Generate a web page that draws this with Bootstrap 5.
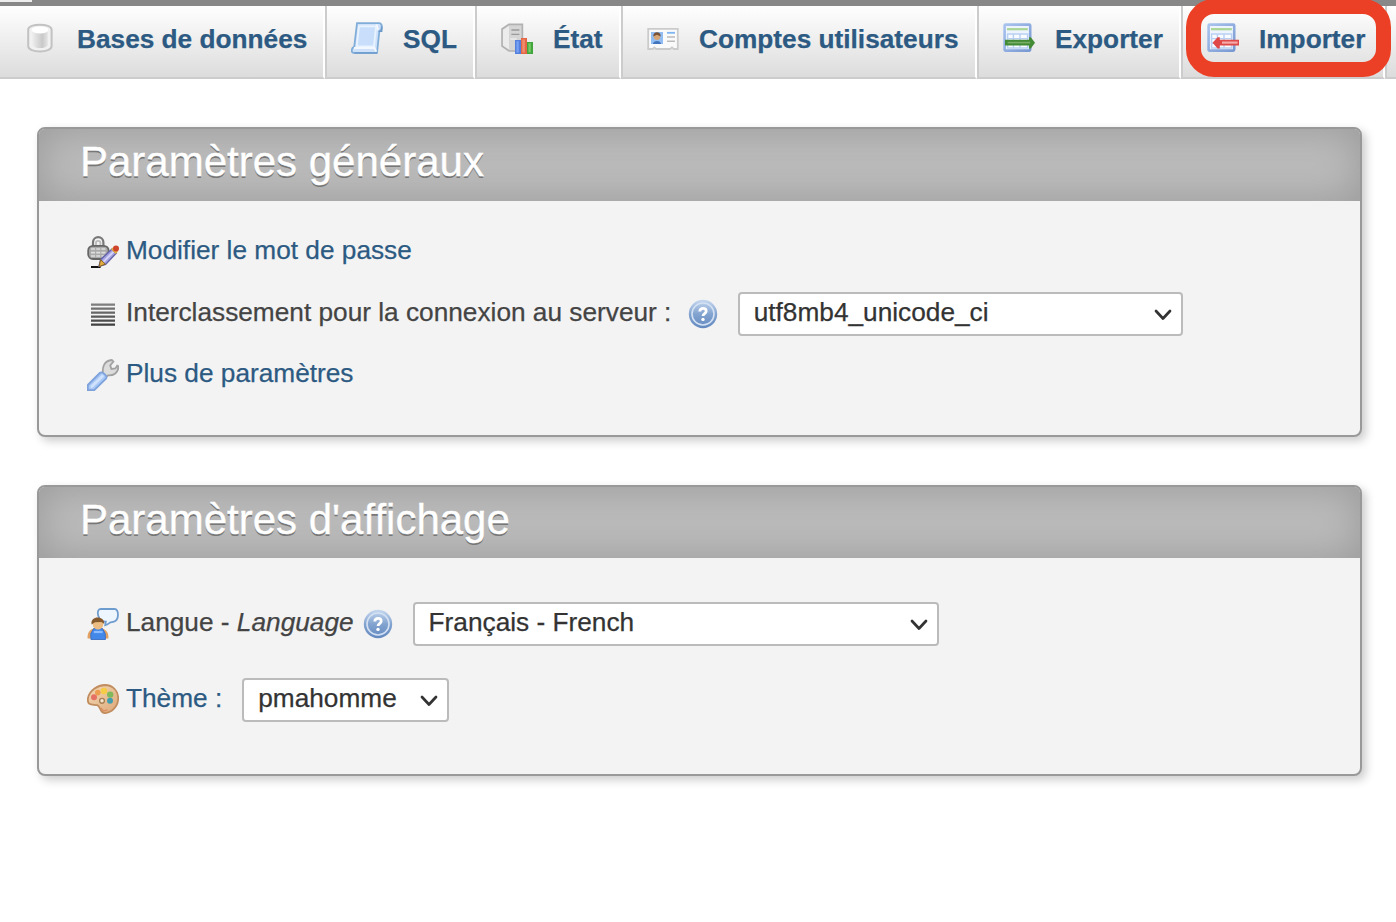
<!DOCTYPE html>
<html lang="fr">
<head>
<meta charset="utf-8">
<title>phpMyAdmin</title>
<link href="https://cdn.jsdelivr.net/npm/bootstrap@5.3.0/dist/css/bootstrap.min.css" rel="stylesheet">
<style>
body{font-family:"Liberation Sans",Arial,sans-serif;font-size:26.24px;line-height:44px;color:#444;background:#fff;overflow:hidden;min-height:100vh;-webkit-text-stroke:.25px}
a{color:#2c5a82;text-decoration:none}
svg.ico{width:32px;height:32px;flex:none;display:block}
.top-strip{height:6px;background:#888}
.top-strip span{display:block;width:32px;height:2px;background:#eee}
.tabs{height:73px;overflow:hidden;margin-left:-2px}
.tabs .tab{flex:none;height:73px;padding:16px 0 0 24px;gap:20px;font-weight:700;background:linear-gradient(#fff,#dcdcdc) padding-box;border:0 solid #ccc;border-left-width:2px;border-right:2px solid #fff;border-bottom-width:2px}
.tabs .tab:first-child{border-left-color:#fff}
.tabs .w1{gap:21px}
.tab span{line-height:34px;height:34px}
.w1{width:327px}.w2{width:150px}.w3{width:146px}.w4{width:356px}.w5{width:204px}
.ring{left:1186px;top:-1px;width:205px;height:78px;border:15px solid #ec4026;border-radius:28px}
.panel{margin:48px 34px 0 37px;border:2px solid #999;border-radius:8px;background:#f3f3f3;box-shadow:4px 4px 10px #ccc}
.panel h2{margin:0;padding-left:41px;color:#fff;font-size:42px;font-weight:400;line-height:66px;background:#bbb;border-radius:6px 6px 0 0;box-shadow:inset 0 0 40px #999;text-shadow:0 2px 0 #777;-webkit-text-stroke:.4px}
.p1{height:310px}.p1 h2{height:72px}
.p2{height:291px}.p2 h2{height:71px}
.line{height:44px;padding-left:48px}
.line .txt{padding-left:7px;height:48px;white-space:pre;padding-bottom:4px}
.r1{margin-top:29px}.r2{margin-top:18px}.r3{margin-top:17px}.r4{margin-top:44px}.r5{margin-top:32px}
.form-select{height:44px;border:2px solid #bbb;border-radius:4px;color:#333;font-size:26.24px;line-height:36px;padding:0 40px 4px 14px;background-color:#fff;background-size:18px 14px;background-position:right 9px top 14px;background-image:url("data:image/svg+xml,%3Csvg xmlns='http://www.w3.org/2000/svg' viewBox='0 0 18 14'%3E%3Cpath d='M2 3l7 7.5L16 3' fill='none' stroke='%23333' stroke-width='2.7' stroke-linecap='round' stroke-linejoin='round'/%3E%3C/svg%3E")}
.s1{width:445px;margin-left:19px}.s2{width:526px;margin-left:19px}.s3{width:207px;margin-left:20px}
.help2{margin-left:8px}
</style>
</head>
<body>
<svg width="0" height="0" class="position-absolute">
<defs>
<linearGradient id="gSilver"><stop stop-color="#eee"/><stop offset=".65" stop-color="#c9c9c9"/><stop offset="1" stop-color="#e4e4e4"/></linearGradient>
<linearGradient id="gBlue" x2="0" y2="1"><stop stop-color="#c6d8ef"/><stop offset=".5" stop-color="#83a4d0"/><stop offset="1" stop-color="#6288bf"/></linearGradient>
<linearGradient id="gGrid" x2="1" y2="1"><stop stop-color="#a9c3ee"/><stop offset="1" stop-color="#7798d2"/></linearGradient>
<linearGradient id="gLines" gradientUnits="userSpaceOnUse" x1="0" y1="2" x2="0" y2="14"><stop stop-color="#858585"/><stop offset="1" stop-color="#3c3c3c"/></linearGradient>
<linearGradient id="gWood" x2="1" y2="1"><stop stop-color="#f5d9b5"/><stop offset="1" stop-color="#dca879"/></linearGradient>
<symbol id="help" viewBox="0 0 16 16"><circle cx="8" cy="8" r="7.1" fill="url(#gBlue)"/><circle cx="8" cy="8" r="5.5" fill="none" stroke="#d3e1f3" stroke-width=".8"/><path d="M6.4 6.7C6.4 4.7 9.6 4.8 9.6 6.6 9.6 7.8 8 7.8 8 9" fill="none" stroke="#fff" stroke-width="1.4"/><circle cx="8" cy="10.7" r=".85" fill="#fff"/></symbol>
<symbol id="grid" viewBox="0 0 16 16"><rect x=".8" y="1.3" width="12.8" height="13" rx=".5" fill="#eef4fd" stroke="url(#gGrid)" stroke-width="1.3"/><path d="M2 3.6h10.4" stroke="#a9d696" stroke-width="1.1"/><path d="M2.3 6h10v7h-10zM2.3 8.3h10M2.3 10.6h10M5.2 6v7M8.5 6v7" fill="#f8fbff" stroke="#b9cff2" stroke-width=".7"/></symbol>
</defs>
</svg>
<div class="top-strip"><span></span></div>
<nav class="tabs d-flex">
<a href="#" class="tab w1 d-flex"><svg class="ico" viewBox="0 0 16 16"><path d="M2.1 3.8C2.1.5 13.8.5 13.8 3.8V12c0 3.7-11.7 3.7-11.7 0z" fill="#f1f1f1" stroke="#c2c2c2" stroke-width="1"/><path d="M4.1 4.5v7.2c1.4 1.7 6.4 1.7 7.8 0V4.5z" fill="url(#gSilver)"/><ellipse cx="8" cy="4" rx="4.2" ry="1.7" fill="#fff"/></svg><span>Bases de données</span></a>
<a href="#" class="tab w2 d-flex"><svg class="ico" viewBox="0 0 16 16"><path d="M3 .6h11.2c1.6.2 1.7 3.7 0 3.9L13 15.4H1.4C-.2 15.4.2 12.7 1.6 12.5z" fill="#d0e2fa" stroke="#81add9" stroke-width=".9"/><path d="M4 2.2h8.5l-1 10H2.9z" fill="#c8defa" stroke="#e9f3ff" stroke-width=".9"/><path d="M1.5 13h10.2l1 1.8M12.8 1.2l.7 3" fill="none" stroke="#f3f8ff" stroke-width=".9"/><path d="M1.7 15.5h11.4M13.8 4.6h1.5V2.3" fill="none" stroke="#6c9acb" stroke-width=".8"/></svg><span>SQL</span></a>
<a href="#" class="tab w3 d-flex"><svg class="ico" viewBox="0 0 16 16"><path d="M.5 3.5L4 1.2h6.7v13.3H4L.5 12z" fill="#d5d5d5" stroke="#b1b1b1" stroke-width=".8"/><path d="M1 4l3-2v11.7l-3-2z" fill="#ececec"/><path d="M5.2 4h4M5.2 6.2h4" stroke="#9b9b9b" stroke-width=".7"/><path d="M4.6 8.5h3.2" stroke="#eee" stroke-width=".7"/><path d="M7 9h3v7H7z" fill="#5380df"/><path d="M7.7 9.6h1.2V15.3H7.7z" fill="#75a0f1"/><path d="M10 8h3v8h-3z" fill="#e56645"/><path d="M10.7 8.7h1.2v6.6h-1.2z" fill="#f08f70"/><path d="M13 10h3v6h-3z" fill="#43a53e"/><path d="M13.7 10.6h1.2v4.6h-1.2z" fill="#76c966"/></svg><span>État</span></a>
<a href="#" class="tab w4 d-flex"><svg class="ico" viewBox="0 0 16 16"><path d="M.6 3.4h14.8v10.1H13.4l-.9-.8-.9.8H4.5l-.8-.8-.8.8H.6z" fill="#fafafa" stroke="#cbcbcb" stroke-width=".9"/><path d="M2 5h6v6H2z" fill="#91bdf3"/><path d="M3 11c0-2 4-2 4 0z" fill="#4174bc"/><circle cx="5" cy="7.4" r="1.6" fill="#d5a576"/><path d="M3.1 7.2c0-2.8 3.8-2.8 3.8 0L5 6.4z" fill="#795235"/><path d="M10 5.4h4" stroke="#7eb4f1" stroke-width=".9"/><path d="M10 7.5h4M10 9.6h4" stroke="#bbb" stroke-width=".8"/></svg><span>Comptes utilisateurs</span></a>
<a href="#" class="tab w5 d-flex"><svg class="ico" viewBox="0 0 16 16"><use href="#grid"/><path d="M1 8.9h12V7.6h.9L16 10.4 13.9 13.2H13v-1.4H1z" fill="#438b35"/><path d="M2.3 10.3H13.6" stroke="#79af68" stroke-width=".8"/></svg><span>Exporter</span></a>
<a href="#" class="tab w5 d-flex"><svg class="ico" viewBox="0 0 16 16"><use href="#grid"/><path d="M16 8.9H6.4V7.6H5.3L2.8 10.4 5.3 13.2h1.1v-1.4H16z" fill="#df4949"/><path d="M7.5 10.3h7.8" stroke="#f4aaa8" stroke-width="1.1"/></svg><span>Importer</span></a>
<a href="#" class="tab w5 d-flex" aria-label="Suite"></a>
</nav>
<div class="ring position-absolute"></div>

<section class="panel p1">
<h2>Paramètres généraux</h2>
<div class="line r1 d-flex align-items-center"><svg class="ico" viewBox="0 0 16 16"><path d="M3 6V3.3C3-.3 8.2-.3 8.2 3.3V6" fill="none" stroke="#777" stroke-width="1.1"/><path d="M4.5 5V3.4c0-1.3 2.2-1.3 2.2 0V5" fill="none" stroke="#bbb" stroke-width=".9"/><rect x=".6" y="4.9" width="10.2" height="6.6" rx="2.4" fill="#aaa" stroke="#666" stroke-width=".9"/><path d="M2 6.5h7.5M2 8.3h7.5M2 10h7.5" stroke="#dedede" stroke-width=".8" stroke-dasharray="2 .6"/><path d="M2 15.5h4.8" stroke="#111" stroke-width="1"/><path d="M6 15.1l.9-3.4 5.6-5.2 2.1 2.1-5.3 5.6z" fill="#a5a3e0" stroke="#6563a9" stroke-width=".7"/><path d="M8.2 12.9l5-5" stroke="#d5d4fb" stroke-width=".9"/><path d="M6 15.3l.8-3.5 2.4 2.3z" fill="#e2ae3f" stroke="#866029" stroke-width=".5"/><path d="M12 6.6l1.2-1.1 2.3 2.2-1.1 1.3z" fill="#e4ac3e"/><circle cx="14.5" cy="6.2" r="1.5" fill="#cf442c"/></svg><a href="#" class="txt">Modifier le mot de passe</a></div>
<div class="line r2 d-flex align-items-center"><svg class="ico" viewBox="0 0 16 16"><path d="M2 2.8h12v1.1H2zm0 2h12v1.1H2zm0 2h12v1.1H2zm0 2h12v1.1H2zm0 2h12v1.1H2zm0 2h12v1.1H2z" fill="url(#gLines)"/></svg><span class="txt">Interclassement pour la connexion au serveur : </span><svg class="ico ms-2"><use href="#help"/></svg><select class="form-select s1" aria-label="Interclassement"><option>utf8mb4_unicode_ci</option></select></div>
<div class="line r3 d-flex align-items-center"><svg class="ico" viewBox="0 0 16 16"><path d="M8 7.4C7.5 4 8.6.8 12.4.5l.8.8-1.6 1.9.6 1.8 2-.3.9-1.4.6.3c.1 3.3-2.5 4.8-5.2 4.6L8.6 9.5z" fill="#dcdcdc" stroke="#a2a2a2" stroke-width=".9"/><path d="M.4 13L6.5 6.9c1.2-.9 4 1.6 3 2.9L3.6 15.6H.4z" fill="#a9c8f5" stroke="#7da2dc" stroke-width=".9"/><path d="M2.4 13.8l5.3-5.2" stroke="#d0e2fd" stroke-width="1.4" stroke-linecap="round"/></svg><a href="#" class="txt">Plus de paramètres</a></div>
</section>

<section class="panel p2">
<h2>Paramètres d'affichage</h2>
<div class="line r4 d-flex align-items-center"><svg class="ico" viewBox="0 0 16 16"><path d="M6.8.5h7c2.3 0 2.3 5.6-.3 6.3-1 .3-1.6.2-2 .5-.7.5-1.2 1-2.4 1.3l.3-1.8C5.3 7 4.2.5 6.8.5z" fill="#edf5ff" stroke="#6f9ccf" stroke-width=".9"/><path d="M.3 15.2c-.2-2.3.8-4.6 3.1-4.9h4c2.4.3 3.5 2.6 3.3 4.9z" fill="#e2a062"/><path d="M2 15.8l-.1-3 1.5-2.6h4.3l1.4 2.6.1 3z" fill="#4388e9" stroke="#3d70c3" stroke-width=".5"/><path d="M3.4 12h4.4" stroke="#8cbcff" stroke-width="1.1"/><circle cx="5.5" cy="8.2" r="2.6" fill="#edbc82"/><path d="M2.3 8.2C1.4 3.8 8.9 3.6 8.6 8L7.2 7 4 7.1z" fill="#86592d"/></svg><span class="txt">Langue - <i>Language</i></span><svg class="ico help2"><use href="#help"/></svg><select class="form-select s2" aria-label="Langue"><option>Français - French</option></select></div>
<div class="line r5 d-flex align-items-center"><svg class="ico" viewBox="0 0 16 16"><path d="M.5 7C1.2 3.2 5.3.6 9 .5c4 0 6.7 3.1 6.6 6.7-.1 4.2-3.3 7.1-6.6 7.4-2.4.2-2.1-3.3-3.9-4C3.4 10 -.2 11.4.5 7z" fill="url(#gWood)" stroke="#c18d5e" stroke-width=".9"/><path d="M7 11.9c.8 1.6 1.7 1.9 3.2 1" fill="none" stroke="#dc8f62" stroke-width=".8"/><circle cx="3.5" cy="6.6" r="1.5" fill="#e67063"/><circle cx="5.4" cy="4.3" r="1.4" fill="#ed9c50"/><circle cx="8.5" cy="3.5" r="1.6" fill="#f5cc45"/><circle cx="11.6" cy="5.3" r="1.6" fill="#7fb95c"/><circle cx="11.5" cy="8.4" r="1.5" fill="#429eae"/><circle cx="7.5" cy="8.4" r="1.2" fill="#f3e5d0" stroke="#a88055" stroke-width=".7"/></svg><a href="#" class="txt">Thème :</a><select class="form-select s3" aria-label="Thème"><option>pmahomme</option></select></div>
</section>
<script src="https://cdn.jsdelivr.net/npm/bootstrap@5.3.0/dist/js/bootstrap.bundle.min.js"></script>
</body>
</html>
